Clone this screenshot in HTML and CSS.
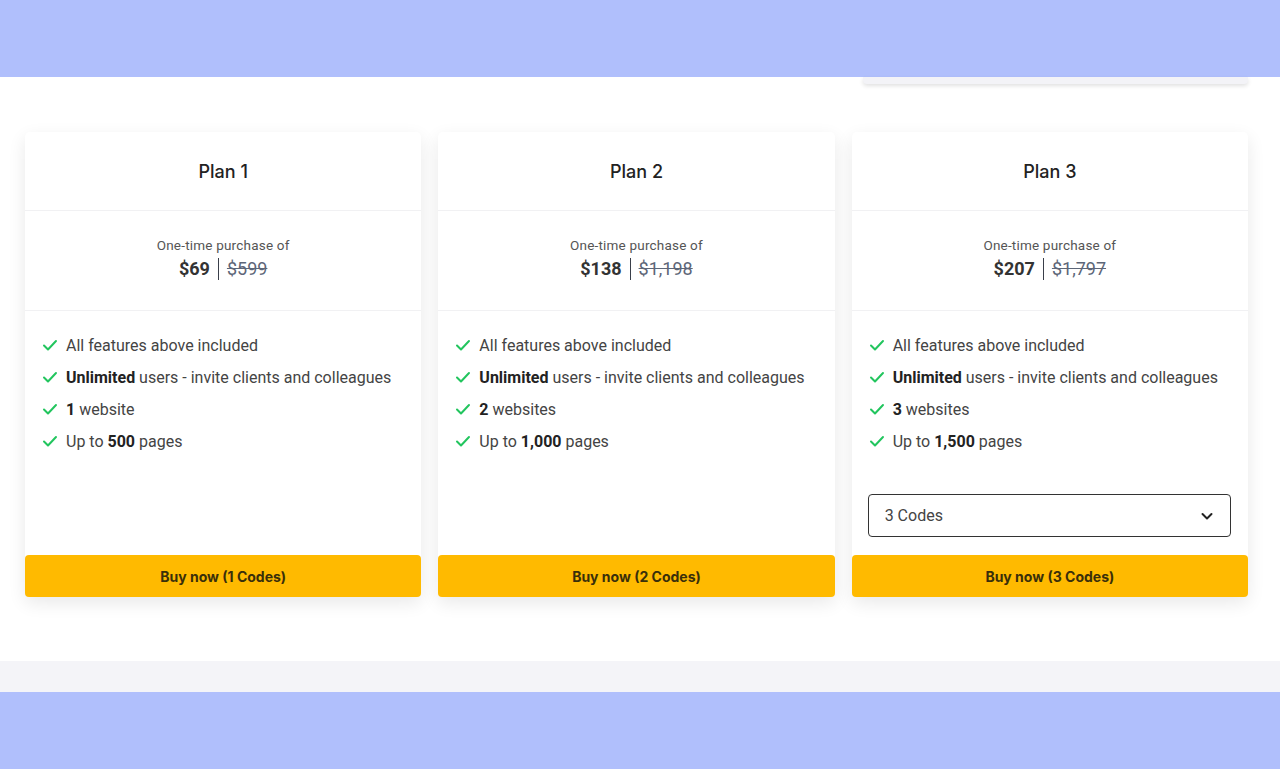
FILE: index.html
```html
<!DOCTYPE html>
<html>
    <head>
        <link rel="stylesheet" href="styles.css">
    </head>
    <body>
        <div class="topbar"></div>
        <div class="pricing">
            <div class="peek"></div>
            <div class="plans">
                <div class="card">
                    <div class="card-head">Plan 1</div>
                    <div class="card-price">
                        <p class="once">One-time purchase of</p>
                        <p class="amount"><b>$69</b><span class="bar"></span><s>$599</s></p>
                    </div>
                    <ul class="features">
                        <li><svg viewBox="0 0 16 16"><path d="M2 8.5l4 4 8-8.5"/></svg><span>All features above included</span></li>
                        <li><svg viewBox="0 0 16 16"><path d="M2 8.5l4 4 8-8.5"/></svg><span><b>Unlimited</b> users - invite clients and colleagues</span></li>
                        <li><svg viewBox="0 0 16 16"><path d="M2 8.5l4 4 8-8.5"/></svg><span><b>1</b> website</span></li>
                        <li><svg viewBox="0 0 16 16"><path d="M2 8.5l4 4 8-8.5"/></svg><span>Up to <b>500</b> pages</span></li>
                    </ul>
                    <button class="buy">Buy now (1 Codes)</button>
                </div>
                <div class="card">
                    <div class="card-head">Plan 2</div>
                    <div class="card-price">
                        <p class="once">One-time purchase of</p>
                        <p class="amount"><b>$138</b><span class="bar"></span><s>$1,198</s></p>
                    </div>
                    <ul class="features">
                        <li><svg viewBox="0 0 16 16"><path d="M2 8.5l4 4 8-8.5"/></svg><span>All features above included</span></li>
                        <li><svg viewBox="0 0 16 16"><path d="M2 8.5l4 4 8-8.5"/></svg><span><b>Unlimited</b> users - invite clients and colleagues</span></li>
                        <li><svg viewBox="0 0 16 16"><path d="M2 8.5l4 4 8-8.5"/></svg><span><b>2</b> websites</span></li>
                        <li><svg viewBox="0 0 16 16"><path d="M2 8.5l4 4 8-8.5"/></svg><span>Up to <b>1,000</b> pages</span></li>
                    </ul>
                    <button class="buy">Buy now (2 Codes)</button>
                </div>
                <div class="card">
                    <div class="card-head">Plan 3</div>
                    <div class="card-price">
                        <p class="once">One-time purchase of</p>
                        <p class="amount"><b>$207</b><span class="bar"></span><s>$1,797</s></p>
                    </div>
                    <ul class="features">
                        <li><svg viewBox="0 0 16 16"><path d="M2 8.5l4 4 8-8.5"/></svg><span>All features above included</span></li>
                        <li><svg viewBox="0 0 16 16"><path d="M2 8.5l4 4 8-8.5"/></svg><span><b>Unlimited</b> users - invite clients and colleagues</span></li>
                        <li><svg viewBox="0 0 16 16"><path d="M2 8.5l4 4 8-8.5"/></svg><span><b>3</b> websites</span></li>
                        <li><svg viewBox="0 0 16 16"><path d="M2 8.5l4 4 8-8.5"/></svg><span>Up to <b>1,500</b> pages</span></li>
                    </ul>
                    <div class="codes">
                        <span>3 Codes</span>
                        <svg viewBox="0 0 14 14"><path d="M2.5 5l4.5 4.5 4.5-4.5"/></svg>
                    </div>
                    <button class="buy">Buy now (3 Codes)</button>
                </div>
            </div>
        </div>
        <div class="strip"></div>
        <div class="bottombar"></div>
    </body>
</html>
```

FILE: styles.css
```css
* {
    box-sizing: border-box;
}

body {
    margin: 0;
    font-family: Roboto, "Liberation Sans", sans-serif;
    color: #333;
    background: #ffffff;
}

.topbar, .bottombar {
    background: #b0bffc;
    height: 77px;
}

.pricing {
    position: relative;
    height: 584px;
    background: #ffffff;
    padding: 55px 0 0 25px;
}

.peek {
    position: absolute;
    top: 0;
    left: 863px;
    width: 385px;
    height: 7px;
    background: #f3f3f7;
    border-radius: 0 0 4px 4px;
    box-shadow: 0 2px 4px rgba(0, 0, 0, 0.12);
}

.plans {
    width: 1223px;
    display: grid;
    grid-template-columns: repeat(3, 1fr);
    gap: 17px;
}

.card {
    height: 465px;
    background: #ffffff;
    border-radius: 5px;
    box-shadow: 0 6px 18px rgba(0, 0, 0, 0.09);
    display: flex;
    flex-direction: column;
}

.card-head {
    height: 79px;
    border-bottom: 1px solid #f1f1f3;
    display: flex;
    align-items: center;
    justify-content: center;
    font-family: Inter, Roboto, sans-serif;
    font-size: 18px;
    font-weight: 500;
    color: #222;
    padding-top: 1px;
}

.card-price {
    height: 100px;
    border-bottom: 1px solid #f1f1f3;
    display: flex;
    flex-direction: column;
    align-items: center;
    justify-content: center;
    padding-bottom: 3px;
}

.card-price p {
    margin: 0;
}

.once {
    font-size: 13.5px;
    letter-spacing: 0.2px;
    line-height: 16px;
    color: #555;
}

.amount {
    display: flex;
    align-items: center;
    font-size: 18px;
    line-height: 24px;
    margin-top: 4px !important;
}

.amount b {
    font-weight: 700;
    color: #333;
}

.amount .bar {
    width: 1px;
    height: 22px;
    background: #3a3f4a;
    margin: 0 8px;
}

.amount s {
    color: #5d6678;
}

.features {
    list-style: none;
    margin: 0;
    padding: 18px 16px 0 17px;
}

.features li {
    display: flex;
    align-items: center;
    height: 32px;
    font-size: 16px;
    color: #444;
}

.features b {
    color: #222;
    font-weight: 700;
}

.features svg {
    width: 16px;
    height: 16px;
    margin-right: 8px;
    fill: none;
    stroke: #22c55e;
    stroke-width: 2;
    stroke-linecap: round;
    stroke-linejoin: round;
}

.codes {
    margin: 37px 17px 0 16px;
    height: 43px;
    border: 1px solid #333;
    border-radius: 4px;
    display: flex;
    align-items: center;
    justify-content: space-between;
    padding: 0 16px 0 16px;
    font-size: 16px;
    color: #444;
}

.codes svg {
    width: 14px;
    height: 14px;
    fill: none;
    stroke: #222;
    stroke-width: 2;
    stroke-linecap: round;
    stroke-linejoin: round;
}

.buy {
    margin-top: auto;
    height: 42px;
    border: none;
    border-radius: 4px;
    background: #ffba00;
    font-family: Inter, Roboto, sans-serif;
    font-size: 14px;
    font-weight: 700;
    color: #3a2f0a;
    cursor: pointer;
}

.strip {
    height: 31px;
    background: #f4f4f8;
}
```
